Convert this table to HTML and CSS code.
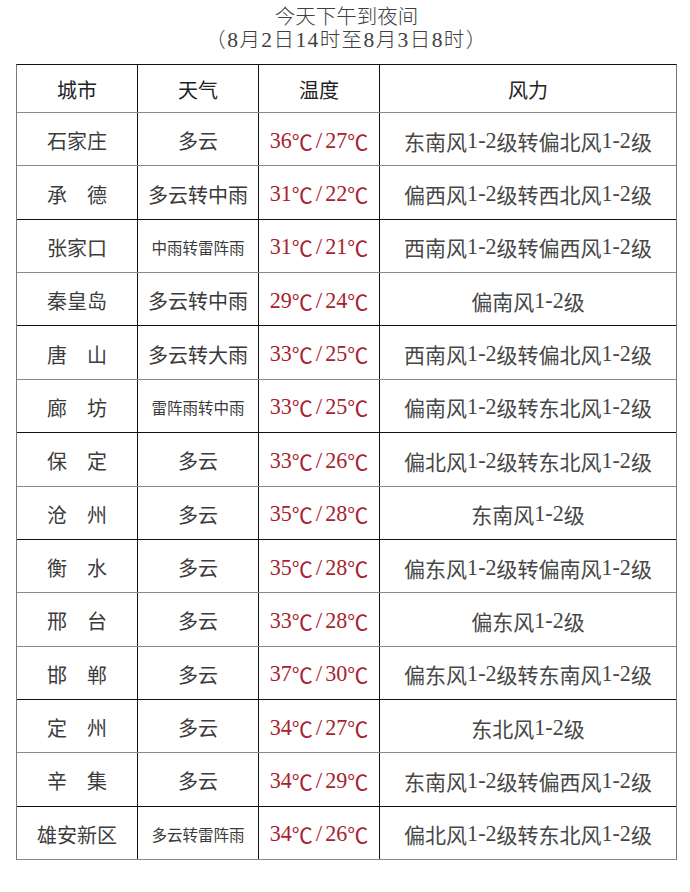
FILE: index.html
```html
<!DOCTYPE html>
<html lang="zh-CN">
<head>
<meta charset="utf-8">
<title>今天下午到夜间</title>
<link rel="stylesheet" href="styles.css">
</head>
<body>
<div class="wrap">
  <div class="title">
    <span class="tl">今天下午到夜间</span>
    <span class="tl sub">（<span class="n">8</span>月<span class="n">2</span>日<span class="n">14</span>时至<span class="n">8</span>月<span class="n">3</span>日<span class="n">8</span>时）</span>
  </div>
  <div class="table">
    <div class="row head gray">
      <div class="cell">城市</div>
      <div class="cell">天气</div>
      <div class="cell">温度</div>
      <div class="cell">风力</div>
    </div>
    <div class="row gray"><div class="cell city">石家庄</div><div class="cell wx">多云</div><div class="cell temp"><span class="n">36</span>℃<span class="sl">/</span><span class="n">27</span>℃</div><div class="cell wind">东南风<span class="n">1-2</span>级转偏北风<span class="n">1-2</span>级</div></div>
    <div class="row black"><div class="cell city">承　德</div><div class="cell wx">多云转中雨</div><div class="cell temp"><span class="n">31</span>℃<span class="sl">/</span><span class="n">22</span>℃</div><div class="cell wind">偏西风<span class="n">1-2</span>级转西北风<span class="n">1-2</span>级</div></div>
    <div class="row gray"><div class="cell city">张家口</div><div class="cell wx small">中雨转雷阵雨</div><div class="cell temp"><span class="n">31</span>℃<span class="sl">/</span><span class="n">21</span>℃</div><div class="cell wind">西南风<span class="n">1-2</span>级转偏西风<span class="n">1-2</span>级</div></div>
    <div class="row black"><div class="cell city">秦皇岛</div><div class="cell wx">多云转中雨</div><div class="cell temp"><span class="n">29</span>℃<span class="sl">/</span><span class="n">24</span>℃</div><div class="cell wind">偏南风<span class="n">1-2</span>级</div></div>
    <div class="row gray"><div class="cell city">唐　山</div><div class="cell wx">多云转大雨</div><div class="cell temp"><span class="n">33</span>℃<span class="sl">/</span><span class="n">25</span>℃</div><div class="cell wind">西南风<span class="n">1-2</span>级转偏北风<span class="n">1-2</span>级</div></div>
    <div class="row black"><div class="cell city">廊　坊</div><div class="cell wx small">雷阵雨转中雨</div><div class="cell temp"><span class="n">33</span>℃<span class="sl">/</span><span class="n">25</span>℃</div><div class="cell wind">偏南风<span class="n">1-2</span>级转东北风<span class="n">1-2</span>级</div></div>
    <div class="row gray"><div class="cell city">保　定</div><div class="cell wx">多云</div><div class="cell temp"><span class="n">33</span>℃<span class="sl">/</span><span class="n">26</span>℃</div><div class="cell wind">偏北风<span class="n">1-2</span>级转东北风<span class="n">1-2</span>级</div></div>
    <div class="row black"><div class="cell city">沧　州</div><div class="cell wx">多云</div><div class="cell temp"><span class="n">35</span>℃<span class="sl">/</span><span class="n">28</span>℃</div><div class="cell wind">东南风<span class="n">1-2</span>级</div></div>
    <div class="row gray"><div class="cell city">衡　水</div><div class="cell wx">多云</div><div class="cell temp"><span class="n">35</span>℃<span class="sl">/</span><span class="n">28</span>℃</div><div class="cell wind">偏东风<span class="n">1-2</span>级转偏南风<span class="n">1-2</span>级</div></div>
    <div class="row gray"><div class="cell city">邢　台</div><div class="cell wx">多云</div><div class="cell temp"><span class="n">33</span>℃<span class="sl">/</span><span class="n">28</span>℃</div><div class="cell wind">偏东风<span class="n">1-2</span>级</div></div>
    <div class="row black"><div class="cell city">邯　郸</div><div class="cell wx">多云</div><div class="cell temp"><span class="n">37</span>℃<span class="sl">/</span><span class="n">30</span>℃</div><div class="cell wind">偏东风<span class="n">1-2</span>级转东南风<span class="n">1-2</span>级</div></div>
    <div class="row gray"><div class="cell city">定　州</div><div class="cell wx">多云</div><div class="cell temp"><span class="n">34</span>℃<span class="sl">/</span><span class="n">27</span>℃</div><div class="cell wind">东北风<span class="n">1-2</span>级</div></div>
    <div class="row black"><div class="cell city">辛　集</div><div class="cell wx">多云</div><div class="cell temp"><span class="n">34</span>℃<span class="sl">/</span><span class="n">29</span>℃</div><div class="cell wind">东南风<span class="n">1-2</span>级转偏西风<span class="n">1-2</span>级</div></div>
    <div class="row gray"><div class="cell city">雄安新区</div><div class="cell wx small">多云转雷阵雨</div><div class="cell temp"><span class="n">34</span>℃<span class="sl">/</span><span class="n">26</span>℃</div><div class="cell wind">偏北风<span class="n">1-2</span>级转东北风<span class="n">1-2</span>级</div></div>
  </div>
</div>
</body>
</html>
```

FILE: styles.css
```css
html, body {
  margin: 0;
  padding: 0;
  background: #ffffff;
}
body {
  font-family: "Noto Sans CJK SC", "Liberation Serif", serif;
  color: #333333;
}
.wrap {
  margin-left: 16px;
  width: 661px;
  padding-top: 4px;
}
.title {
  display: flex;
  flex-direction: column;
  align-items: center;
  font-size: 20.5px;
  color: #404040;
  font-weight: 300;
}
.tl {
  display: block;
  height: 23px;
  line-height: 23px;
  overflow: visible;
}
.tl.sub {
  letter-spacing: 1.4px;
}
.table {
  margin-top: 14px;
  border-top: 1px solid #111111;
  border-left: 1px solid #7a7a7a;
  border-right: 1px solid #7a7a7a;
}
.row {
  display: grid;
  grid-template-columns: 121px 121px 121px 1fr;
  box-sizing: border-box;
  height: 53.36px;
  border-bottom: 1px solid #8a8a8a;
}
.row.black {
  border-bottom-color: #111111;
}
.row.head {
  height: 48px;
}
.cell {
  display: flex;
  align-items: center;
  justify-content: center;
  border-right: 1px solid #111111;
  font-size: 20px;
  padding-top: 3px;
  box-sizing: border-box;
  white-space: nowrap;
}
.cell:last-child {
  border-right: none;
}
.head .cell {
  color: #222222;
  padding-top: 1px;
}
.city {
  color: #3c3c3c;
}
.wx {
  color: #3a3a3a;
}
.wx.small {
  font-size: 15.5px;
}
.temp {
  color: #a8222e;
  font-size: 21px;
}
.sl {
  font-family: "Liberation Serif", serif;
  font-size: 23px;
  margin: 0 3px;
}
.wind {
  color: #474747;
  font-size: 21px;
}
.n {
  font-family: "Liberation Serif", serif;
  font-size: 1.05em;
}
```
